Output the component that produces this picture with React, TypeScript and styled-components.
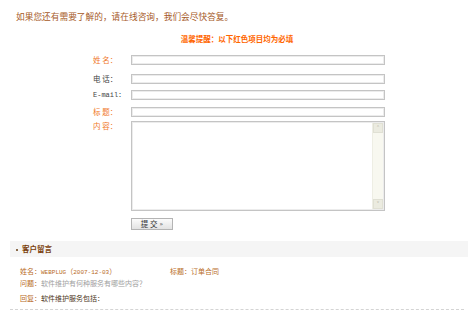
import React from 'react';
import styled, { createGlobalStyle } from 'styled-components';

const GlobalStyle = createGlobalStyle`
  html, body {
    margin: 0;
    padding: 0;
    background: #ffffff;
  }
  body {
    font-family: "Noto Sans CJK SC", "Liberation Sans", sans-serif;
  }
`;

const Page = styled.div`
  width: 474px;
  height: 323px;
  overflow: hidden;
  background: #fff;
`;

const Intro = styled.p`
  margin: 0;
  padding: 12px 0 0 16px;
  font-size: 8.7px;
  line-height: 10px;
  color: #a65a28;
  white-space: nowrap;
`;

const Notice = styled.div`
  margin-top: 12px;
  text-align: center;
  font-size: 7.5px;
  line-height: 10px;
  font-weight: bold;
  color: #ff6600;
`;

const Form = styled.form`
  margin-top: 11px;
  padding-left: 93px;
  display: grid;
  grid-template-columns: 38px 254px;
`;

const Label = styled.label<{ $required?: boolean; $mt?: number; $mono?: boolean }>`
  margin-top: ${p => p.$mt ?? 0}px;
  font-size: ${p => (p.$mono ? '7px' : '7.5px')};
  font-family: ${p =>
    p.$mono ? '"Liberation Mono", "Noto Sans CJK SC", monospace' : '"Noto Sans CJK SC", sans-serif'};
  line-height: 10px;
  color: ${p => (p.$required ? '#f07828' : '#444')};
  white-space: pre;
`;

const Input = styled.input<{ $mt?: number }>`
  margin: ${p => p.$mt ?? 0}px 0 0 0;
  box-sizing: border-box;
  width: 254px;
  height: 10px;
  padding: 0;
  border: 1px solid #c4c4c4;
  box-shadow: inset 0 0 0 1px #ececec;
  background: #fff;
  outline: none;
`;

const AreaBox = styled.div<{ $mt?: number }>`
  margin-top: ${p => p.$mt ?? 0}px;
  box-sizing: border-box;
  width: 254px;
  height: 90px;
  border: 1px solid #c4c4c4;
  box-shadow: inset 0 0 0 1px #ececec;
  display: flex;
  padding: 1px;
`;

const Area = styled.textarea`
  flex: 1;
  border: none;
  resize: none;
  outline: none;
  padding: 0;
  background: transparent;
`;

const Scrollbar = styled.div`
  width: 10px;
  display: flex;
  flex-direction: column;
  justify-content: space-between;
  background: #f8f8f0;
  border-left: 1px solid #eeeee4;
`;

const ScrollArrow = styled.div`
  height: 8px;
  background: #ebebe0;
  border: 1px solid #e0e0d4;
  display: flex;
  align-items: center;
  justify-content: center;
  font-size: 6px;
  line-height: 6px;
  color: #b0b0a0;
  font-family: "DejaVu Sans", sans-serif;
`;

const Spacer = styled.div``;

const SubmitButton = styled.button`
  margin-top: 7px;
  width: 42px;
  height: 12px;
  padding: 0;
  border: 1px solid #b4b4b4;
  background: linear-gradient(#fbfbfb, #e2e2e2);
  font-family: "Noto Sans CJK SC", sans-serif;
  font-size: 7.5px;
  line-height: 10px;
  color: #333;
  display: flex;
  align-items: center;
  justify-content: center;
  gap: 2px;
  white-space: pre;
`;

const Arrows = styled.span`
  font-size: 6px;
  font-family: "DejaVu Sans", sans-serif;
`;

const SectionBar = styled.div`
  margin: 11px 6px 0 10px;
  height: 16px;
  background: #f5f5f5;
  display: flex;
  align-items: center;
  padding-left: 6px;
  gap: 4px;
`;

const Dot = styled.span`
  width: 2px;
  height: 2px;
  background: #8a6a4a;
  margin-top: 2px;
`;

const SectionTitle = styled.span`
  font-size: 7.5px;
  line-height: 10px;
  font-weight: bold;
  color: #7a3e0a;
`;

const MessageList = styled.div`
  padding-left: 20px;
`;

const MessageRow = styled.div<{ $mt?: number; $cols?: boolean }>`
  margin-top: ${p => p.$mt ?? 0}px;
  height: 12px;
  line-height: 12px;
  font-size: 7px;
  display: ${p => (p.$cols ? 'grid' : 'block')};
  grid-template-columns: 150px auto;
  white-space: nowrap;
`;

const Key = styled.span`
  color: #b86a25;
`;

const Mono = styled.span`
  font-family: "Liberation Mono", monospace;
  font-size: 6px;
  color: #b86a25;
`;

const Value = styled.span<{ $tone?: 'muted' | 'dark' | 'brown' }>`
  color: ${p => (p.$tone === 'muted' ? '#a0a0a0' : p.$tone === 'dark' ? '#4a3418' : '#b86a25')};
`;

const Divider = styled.div`
  margin: 5px 10px 0 10px;
  border-top: 1px dashed #d4d4d4;
`;

export default function App() {
  return (
    <Page>
      <GlobalStyle />
      <Intro>如果您还有需要了解的，请在线咨询，我们会尽快答复。</Intro>
      <Notice>温馨提醒：以下红色项目均为必填</Notice>

      <Form onSubmit={e => e.preventDefault()}>
        <Label $required>{'姓 名：'}</Label>
        <Input />
        <Label $mt={9}>{'电 话：'}</Label>
        <Input $mt={9} />
        <Label $mt={6} $mono>
          E-mail：
        </Label>
        <Input $mt={6} />
        <Label $required $mt={7}>
          {'标 题：'}
        </Label>
        <Input $mt={7} />
        <Label $required $mt={4}>
          {'内 容：'}
        </Label>
        <AreaBox $mt={4}>
          <Area />
          <Scrollbar>
            <ScrollArrow>˄</ScrollArrow>
            <ScrollArrow>˅</ScrollArrow>
          </Scrollbar>
        </AreaBox>
        <Spacer />
        <SubmitButton type='submit'>
          {'提 交'}
          <Arrows>»</Arrows>
        </SubmitButton>
      </Form>

      <SectionBar>
        <Dot />
        <SectionTitle>客户留言</SectionTitle>
      </SectionBar>

      <MessageList>
        <MessageRow $mt={8} $cols>
          <span>
            <Key>姓名：</Key>
            <Mono>WEBPLUG</Mono>
            <Value>（</Value>
            <Mono>2007-12-03</Mono>
            <Value>）</Value>
          </span>
          <span>
            <Key>标题：</Key>
            <Value>订单合同</Value>
          </span>
        </MessageRow>
        <MessageRow>
          <Key>问题：</Key>
          <Value $tone='muted'>软件维护有何种服务有哪些内容？</Value>
        </MessageRow>
        <MessageRow $mt={3}>
          <Key>回复：</Key>
          <Value $tone='dark'>软件维护服务包括：</Value>
        </MessageRow>
      </MessageList>
      <Divider />
    </Page>
  );
}
